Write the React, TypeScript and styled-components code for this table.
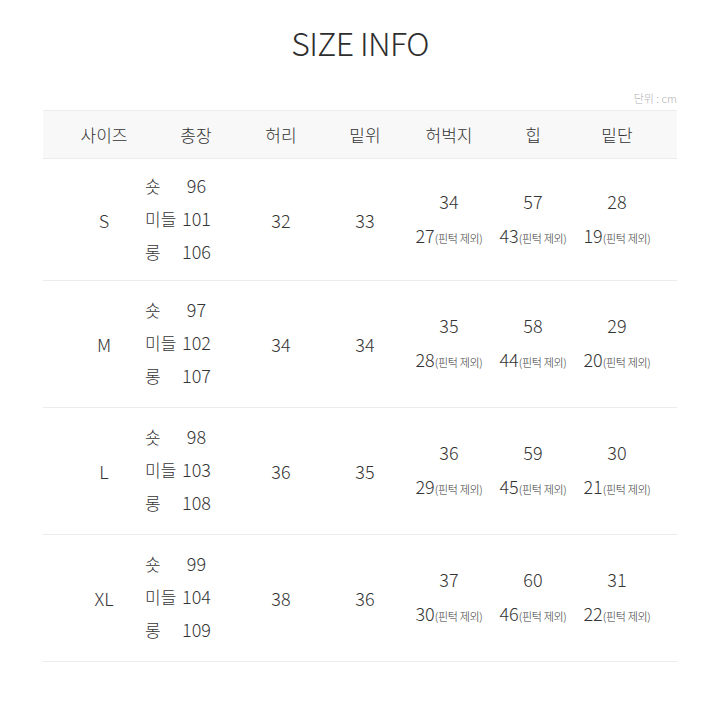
import React from "react";
import styled, { createGlobalStyle } from "styled-components";

const Global = createGlobalStyle`
  html, body { margin: 0; padding: 0; background: #ffffff; }
  body { font-family: "Noto Sans CJK KR", "Noto Sans", sans-serif; color: #333333; }
`;

const Page = styled.div`
  width: 720px;
  height: 720px;
  box-sizing: border-box;
  padding: 22px 43px 0 43px;
  background: #ffffff;
`;

const Title = styled.h1`
  margin: 0;
  text-align: center;
  font-size: 32px;
  line-height: 40px;
  font-weight: 300;
  color: #2e2e2e;
  letter-spacing: -0.6px;
`;

const Unit = styled.div`
  margin-top: 28px;
  text-align: right;
  font-size: 11px;
  line-height: 16px;
  color: #b2b2b2;
  font-weight: 300;
`;

const Table = styled.div`
  margin-top: 4px;
  width: 634px;
`;

const Row = styled.div<{ $header?: boolean }>`
  display: grid;
  grid-template-columns: 98px 86px repeat(5, 84px);
  padding: 0 18px 0 12px;
  align-items: center;
  height: ${(p) => (p.$header ? "47px" : "126px")};
  background: ${(p) => (p.$header ? "#f8f8f8" : "transparent")};
  border-top: ${(p) => (p.$header ? "1px solid #ececec" : "none")};
  border-bottom: 1px solid #ececec;

  &:nth-child(2) {
    height: 121px;
  }
`;

const HeadCell = styled.div`
  text-align: center;
  font-size: 17px;
  font-weight: 300;
  color: #333333;
`;

const Cell = styled.div`
  text-align: center;
  font-size: 18px;
  font-weight: 300;
  color: #353535;
`;

const LengthList = styled.div`
  display: grid;
  grid-template-columns: 31px 41px;
  row-gap: 8px;
  margin-left: -8px;
  margin-top: -3px;
  font-size: 18px;
  line-height: 25px;
  font-weight: 300;
  color: #353535;
`;

const LenLabel = styled.span`
  text-align: left;
  font-size: 17px;
  white-space: nowrap;
`;

const LenValue = styled.span`
  text-align: center;
`;

const DualCell = styled.div`
  display: flex;
  flex-direction: column;
  align-items: center;
  gap: 9px;
  font-size: 18px;
  line-height: 25px;
  font-weight: 300;
  color: #353535;
`;

const Note = styled.span`
  font-size: 11px;
  letter-spacing: -0.3px;
`;

const Sub = styled.span`
  white-space: nowrap;
`;

type SizeRow = {
  size: string;
  lengths: [string, number][];
  waist: number;
  rise: number;
  thigh: [number, number];
  hip: [number, number];
  hem: [number, number];
};

const rows: SizeRow[] = [
  { size: "S", lengths: [["숏", 96], ["미들", 101], ["롱", 106]], waist: 32, rise: 33, thigh: [34, 27], hip: [57, 43], hem: [28, 19] },
  { size: "M", lengths: [["숏", 97], ["미들", 102], ["롱", 107]], waist: 34, rise: 34, thigh: [35, 28], hip: [58, 44], hem: [29, 20] },
  { size: "L", lengths: [["숏", 98], ["미들", 103], ["롱", 108]], waist: 36, rise: 35, thigh: [36, 29], hip: [59, 45], hem: [30, 21] },
  { size: "XL", lengths: [["숏", 99], ["미들", 104], ["롱", 109]], waist: 38, rise: 36, thigh: [37, 30], hip: [60, 46], hem: [31, 22] },
];

const headers = ["사이즈", "총장", "허리", "밑위", "허벅지", "힙", "밑단"];

function Dual({ v }: { v: [number, number] }) {
  return (
    <DualCell>
      <span>{v[0]}</span>
      <Sub>
        {v[1]}
        <Note>(핀턱 제외)</Note>
      </Sub>
    </DualCell>
  );
}

export default function App() {
  return (
    <>
      <Global />
      <Page>
        <Title>SIZE INFO</Title>
        <Unit>단위 : cm</Unit>
        <Table>
          <Row $header>
            {headers.map((h) => (
              <HeadCell key={h}>{h}</HeadCell>
            ))}
          </Row>
          {rows.map((r) => (
            <Row key={r.size}>
              <Cell>{r.size}</Cell>
              <LengthList>
                {r.lengths.map(([l, v]) => (
                  <React.Fragment key={l}>
                    <LenLabel>{l}</LenLabel>
                    <LenValue>{v}</LenValue>
                  </React.Fragment>
                ))}
              </LengthList>
              <Cell>{r.waist}</Cell>
              <Cell>{r.rise}</Cell>
              <Dual v={r.thigh} />
              <Dual v={r.hip} />
              <Dual v={r.hem} />
            </Row>
          ))}
        </Table>
      </Page>
    </>
  );
}
